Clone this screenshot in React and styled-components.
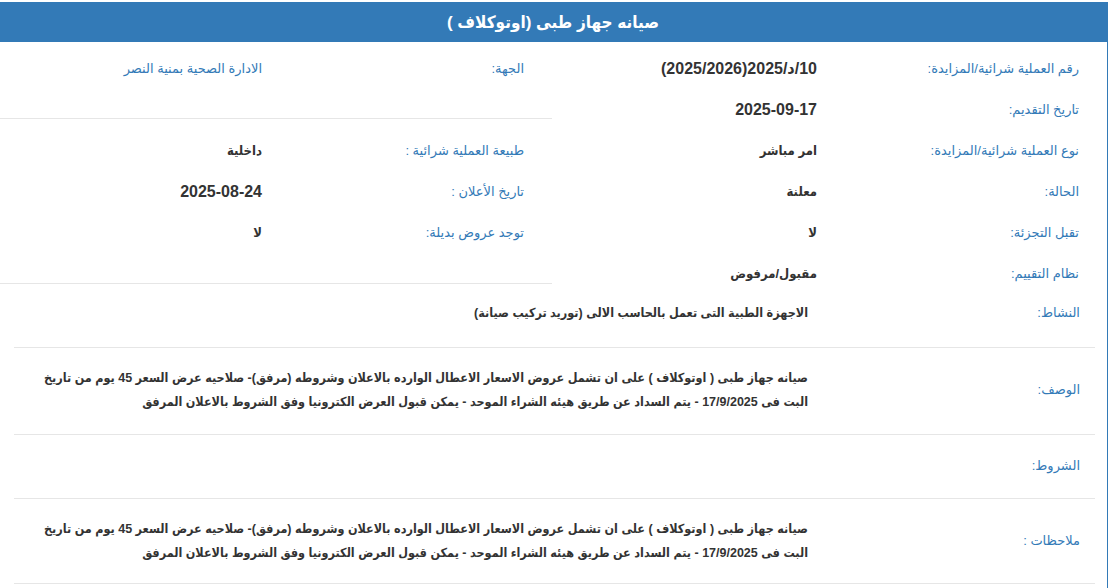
import styled, { createGlobalStyle } from "styled-components";

const GlobalStyle = createGlobalStyle`
  html, body {
    margin: 0;
    padding: 0;
    background: #fff;
    overflow: hidden;
  }
  body {
    font-family: "Liberation Sans", "DejaVu Sans", Arial, sans-serif;
    color: #333;
  }
`;

const boldStack = `"Liberation Sans", "DejaVu Sans Condensed", "DejaVu Sans", sans-serif`;

const mainRows = [
  { label: "رقم العملية شرائية/المزايدة:", value: "10/د/2025(2025/2026)", num: true },
  { label: "تاريخ التقديم:", value: "2025-09-17", num: true },
  { label: "نوع العملية شرائية/المزايدة:", value: "امر مباشر" },
  { label: "الحالة:", value: "معلنة" },
  { label: "تقبل التجزئة:", value: "لا" },
  { label: "نظام التقييم:", value: "مقبول/مرفوض" },
];

const sideRows = [
  { label: "طبيعة العملية شرائية :", value: "داخلية" },
  { label: "تاريخ الأعلان :", value: "2025-08-24", num: true },
  { label: "توجد عروض بديلة:", value: "لا" },
];

const longText =
  "صيانه جهاز طبى ( اوتوكلاف ) على ان تشمل عروض الاسعار الاعطال الوارده بالاعلان وشروطه (مرفق)- صلاحيه عرض السعر 45 يوم من تاريخ البت فى 17/9/2025 - يتم السداد عن طريق هيئه الشراء الموحد - يمكن قبول العرض الكترونيا وفق الشروط بالاعلان المرفق";

// top / bottom padding of each wide row, read off the reference
const wideRows = [
  { label: "النشاط:", value: "الاجهزة الطبية التى تعمل بالحاسب الالى (توريد تركيب صيانة)", top: 7, bottom: 22 },
  { label: "الوصف:", value: longText, top: 18, bottom: 20 },
  { label: "الشروط:", value: "", top: 19, bottom: 20 },
  { label: "ملاحظات :", value: longText, top: 18, bottom: 18 },
];

export default function App() {
  return (
    <>
      <GlobalStyle />
      <Panel dir="rtl">
        <Heading>صيانه جهاز طبى (اوتوكلاف )</Heading>
        <TopGrid>
          <Column>
            {mainRows.map((r) => (
              <InfoRow key={r.label}>
                <Label>{r.label}</Label>
                <Value $num={r.num}>{r.value}</Value>
              </InfoRow>
            ))}
          </Column>
          <Column>
            <InfoRow>
              <Label>الجهة:</Label>
              <Label>الادارة الصحية بمنية النصر</Label>
            </InfoRow>
            <Divider $top={29} $bottom={11} />
            {sideRows.map((r) => (
              <InfoRow key={r.label}>
                <Label>{r.label}</Label>
                <Value $num={r.num}>{r.value}</Value>
              </InfoRow>
            ))}
            <Divider $top={30} $bottom={0} />
          </Column>
        </TopGrid>
        <WideSection>
          {wideRows.map((r, i) => (
            <div key={r.label}>
              {i > 0 && <Divider $top={0} $bottom={0} />}
              <WideRow $top={r.top} $bottom={r.bottom}>
                <Label>{r.label}</Label>
                <LongValue>{r.value}</LongValue>
              </WideRow>
            </div>
          ))}
          <Divider $top={0} $bottom={0} />
        </WideSection>
      </Panel>
    </>
  );
}

const Panel = styled.div`
  box-sizing: border-box;
  width: 1110px;
  margin: 2px 0 0 -2px;
  border: 1px solid #337ab7;
  border-top: none;
  background: #fff;
`;

const Heading = styled.div`
  height: 40px;
  background: #337ab7;
  color: #fff;
  font-family: ${boldStack};
  font-weight: bold;
  font-size: 17px;
  display: flex;
  align-items: center;
  justify-content: center;
`;

const TopGrid = styled.div`
  display: grid;
  grid-template-columns: 555px 1fr;
  align-items: start;
  padding-top: 6px;
`;

const Column = styled.div`
  display: flex;
  flex-direction: column;
`;

const InfoRow = styled.div`
  display: grid;
  grid-template-columns: 262px 1fr;
  height: 41px;
  align-items: center;
`;

const Label = styled.div`
  padding-right: 28px;
  color: #337ab7;
  font-size: 13px;
  white-space: nowrap;
`;

const Value = styled.div`
  padding-right: 28px;
  color: #333;
  font-family: ${boldStack};
  font-weight: bold;
  font-size: ${(p) => (p.$num ? "16px" : "13px")};
  white-space: nowrap;
`;

const Divider = styled.div`
  height: 1px;
  background: #e6e6e6;
  margin: ${(p) => `${p.$top}px 0 ${p.$bottom}px`};
`;

const WideSection = styled.div`
  padding: 0 12px 30px 15px;
`;

const WideRow = styled.div`
  display: grid;
  grid-template-columns: 272px 1fr;
  align-items: center;
  padding: ${(p) => `${p.$top}px 0 ${p.$bottom}px`};
  line-height: 24px;
  min-height: 24px;

  & > ${Label} {
    padding-right: 15px;
  }
`;

const LongValue = styled.div`
  padding: 0 15px 0 20px;
  color: #333;
  font-family: ${boldStack};
  font-weight: bold;
  font-size: 12.5px;
`;
